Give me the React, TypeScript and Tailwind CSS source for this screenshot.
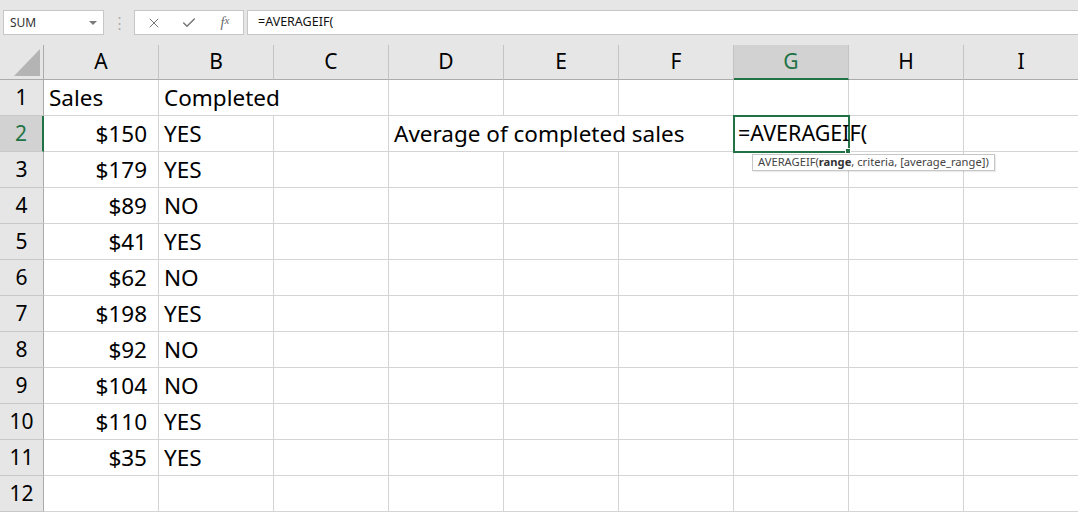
import React from "react";
import { X, Check } from "lucide-react";

const COLS = ["A", "B", "C", "D", "E", "F", "G", "H", "I"];
const SALES = [150, 179, 89, 41, 62, 198, 92, 104, 110, 35];
const DONE = ["YES", "YES", "NO", "YES", "NO", "YES", "NO", "NO", "YES", "YES"];

type Cell = { text?: string; right?: boolean; noBorder?: boolean };

function cellFor(row: number, col: number): Cell {
  if (row === 1) {
    if (col === 0) return { text: "Sales" };
    if (col === 1) return { text: "Completed", noBorder: true };
    return {};
  }
  if (row >= 2 && row <= 11) {
    if (col === 0) return { text: `$${SALES[row - 2]}`, right: true };
    if (col === 1) return { text: DONE[row - 2] };
  }
  if (row === 2) {
    if (col === 3) return { text: "Average of completed sales", noBorder: true };
    if (col === 4) return { noBorder: true };
  }
  return {};
}

function Toolbar() {
  return (
    <div className="flex h-[45px] items-start bg-[#e6e6e6] pt-[10px] text-[12px] text-[#222]" style={{ fontFamily: "'Noto Sans', sans-serif" }}>
      <div className="ml-[3px] flex h-[25px] w-[101px] items-center justify-between border border-[#c6c6c6] bg-white pl-[6px] pr-[6px]">
        <span className="text-[12px] text-[#333]">SUM</span>
        <span className="h-0 w-0 border-x-[4px] border-t-[4px] border-x-transparent border-t-[#7a7a7a]" />
      </div>
      <div className="flex h-[25px] w-[30px] items-center justify-center text-[15px] text-[#b0b0b0]">⋮</div>
      <div className="flex h-[25px] w-[110px] items-center border border-[#c6c6c6] bg-white">
        <div className="flex w-[36px] justify-center pl-[2px] text-[#777]">
          <X size={16} strokeWidth={1.5} />
        </div>
        <div className="flex w-[36px] justify-center text-[#777]">
          <Check size={16} strokeWidth={2.2} />
        </div>
        <div className="flex w-[36px] justify-center text-[14px] italic text-[#666]" style={{ fontFamily: "'Liberation Serif', serif" }}>
          f<span className="text-[11px]">x</span>
        </div>
      </div>
      <div className="ml-[3px] flex h-[25px] flex-1 items-center border-y border-l border-[#c6c6c6] bg-white pl-[10px] text-[12.5px] text-[#111]">
        =AVERAGEIF(
      </div>
    </div>
  );
}

function Sheet() {
  return (
    <div className="grid grid-cols-[44px_repeat(9,115px)] grid-rows-[35px_repeat(12,36px)] bg-white text-[22.5px] text-black" style={{ fontFamily: "'Noto Sans', sans-serif" }}>
      <div className="relative border-b border-r border-[#ababab] bg-[#e6e6e6]">
        <span className="absolute bottom-[3px] right-[3px] h-0 w-0 border-b-[27px] border-l-[26px] border-b-[#b4b4b4] border-l-transparent" />
      </div>
      {COLS.map((c) => {
        const sel = c === "G";
        return (
          <div
            key={c}
            className={`flex items-center justify-center border-r border-[#c4c4c4] text-[21px] ${sel ? "border-b-2 border-b-[#217346] bg-[#d2d2d2] text-[#217346]" : "border-b border-b-[#ababab] bg-[#e6e6e6]"}`}
          >
            {c}
          </div>
        );
      })}
      {Array.from({ length: 12 }, (_, i) => i + 1).map((r) => (
        <React.Fragment key={r}>
          <div
            className={`flex items-center justify-center border-b border-[#c8c8c8] text-[21px] ${r === 2 ? "border-r-2 border-r-[#217346] bg-[#d2d2d2] text-[#217346]" : "border-r border-r-[#ababab] bg-[#e6e6e6]"}`}
          >
            {r}
          </div>
          {COLS.map((c, ci) => {
            const cell = cellFor(r, ci);
            const active = r === 2 && c === "G";
            return (
              <div
                key={c}
                className={`relative flex items-center whitespace-nowrap border-b border-[#d4d4d4] ${cell.noBorder ? "" : "border-r"} ${cell.right ? "justify-end pr-[11px]" : "pl-[5px]"}`}
              >
                {cell.text && <span className="relative z-10">{cell.text}</span>}
                {active && (
                  <>
                    <div className="absolute -left-px -top-px z-20 h-[38px] w-[117px] border-2 border-[#217346]" />
                    <div className="absolute -bottom-[3px] -right-[3px] z-20 h-[6px] w-[6px] border border-white bg-[#217346]" />
                    <span className="relative z-30 -ml-[1px] text-[21.5px]">=AVERAGEIF(</span>
                    <div className="absolute left-[18px] top-[38px] z-30 flex h-[17px] items-center border border-[#c6c6c6] bg-white px-[5px] text-[11.2px] text-[#444] shadow-[1px_1px_1px_rgba(0,0,0,0.08)]">
                      AVERAGEIF(<b className="font-bold text-[#333]">range</b>, criteria, [average_range])
                    </div>
                  </>
                )}
              </div>
            );
          })}
        </React.Fragment>
      ))}
    </div>
  );
}

export default function App() {
  return (
    <div className="h-[512px] w-[1078px] overflow-hidden bg-white">
      <Toolbar />
      <Sheet />
    </div>
  );
}
